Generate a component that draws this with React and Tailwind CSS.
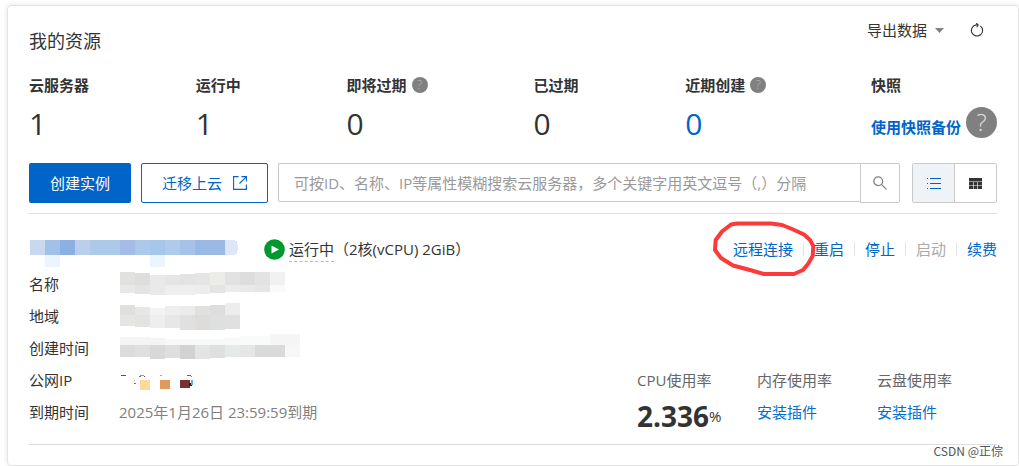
import { useState } from 'react';

// [x, y, width, height, fill]
const idBlocks = [
  [1, 2, 15, 15, '#c9d8ee'],
  [16, 2, 15, 15, '#a1c1e8'],
  [31, 2, 15, 15, '#8ab1e1'],
  [46, 2, 15, 15, '#bbcfec'],
  [61, 2, 30, 15, '#acc9ea'],
  [91, 2, 15, 15, '#a3bde6'],
  [106, 2, 15, 15, '#acc8ea'],
  [121, 2, 15, 15, '#a7c7ea'],
  [136, 2, 15, 15, '#afcbeb'],
  [151, 2, 15, 15, '#a7c1e7'],
  [166, 2, 30, 15, '#9ab9e4'],
  [196, 2, 10, 15, '#dbe7f8'],
  [206, 3, 2, 13, '#dbe7f8'],
  [208, 6, 1, 7, '#dbe7f8'],
  [16, 17, 15, 12, '#ecf4fe'],
  [121, 17, 15, 12, '#ecf4fe'],
];

const nameBlocks = [
  [1, 4, 15, 13, '#e1e1e0'],
  [16, 5, 15, 12, '#dedede'],
  [31, 7, 15, 10, '#e9e9e9'],
  [46, 7, 15, 10, '#e5e5e5'],
  [61, 6, 15, 11, '#e3e3e3'],
  [76, 5, 15, 12, '#e5e5e5'],
  [91, 4, 15, 13, '#ecece9'],
  [106, 4, 15, 13, '#e2e2e2'],
  [121, 4, 15, 13, '#dddddd'],
  [136, 4, 15, 13, '#e3e3e3'],
  [151, 4, 15, 13, '#f1f1f1'],
  [1, 17, 15, 8, '#e8e8e8'],
  [16, 17, 15, 9, '#e4e4e4'],
  [31, 17, 15, 10, '#e9e9ea'],
  [46, 17, 30, 10, '#eeeeee'],
  [76, 17, 15, 9, '#ededed'],
  [91, 17, 15, 8, '#e4e4e2'],
  [106, 17, 15, 7, '#ebebeb'],
  [121, 17, 15, 7, '#e9e9e9'],
  [136, 17, 15, 7, '#e6e6e6'],
  [151, 17, 15, 7, '#fafafa'],
];

const regionBlocks = [
  [1, 5, 15, 10, '#e0e0df'],
  [16, 7, 15, 8, '#e7e7e6'],
  [31, 8, 15, 7, '#f3f3f3'],
  [46, 6, 15, 9, '#eeeeee'],
  [61, 6, 15, 9, '#ebebeb'],
  [76, 6, 15, 9, '#e1e1e0'],
  [91, 5, 15, 10, '#dddddd'],
  [106, 3, 15, 12, '#ededed'],
  [1, 15, 15, 11, '#e5e5e4'],
  [16, 15, 15, 12, '#e3e3e2'],
  [31, 15, 15, 13, '#eeeeee'],
  [46, 15, 15, 13, '#e7e7e7'],
  [61, 15, 15, 15, '#e0e0e0'],
  [76, 15, 15, 15, '#dddcdb'],
  [91, 15, 15, 15, '#dee0e0'],
  [106, 15, 15, 14, '#e0e0e0'],
];

const createdBlocks = [
  [1, 5, 30, 8, '#f4f4f4'],
  [31, 6, 15, 7, '#f4f4f4'],
  [46, 7, 60, 6, '#f7f8f8'],
  [106, 6, 15, 7, '#f8f9f9'],
  [121, 4, 30, 9, '#f9fafa'],
  [151, 2, 30, 11, '#f5f5f5'],
  [1, 13, 15, 12, '#dcdcdc'],
  [16, 13, 15, 12, '#e0dfde'],
  [31, 13, 15, 14, '#d8d8d8'],
  [46, 13, 15, 13, '#dedede'],
  [61, 13, 15, 14, '#d4d2d0'],
  [76, 13, 15, 14, '#e2e4e6'],
  [91, 13, 15, 13, '#dedfdf'],
  [106, 13, 15, 12, '#e6e9e9'],
  [121, 13, 15, 12, '#e6e6e6'],
  [136, 13, 30, 12, '#dadada'],
  [166, 13, 15, 12, '#f7f7f7'],
];

const ipBlocks = [
  [2, 11, 5, 1, '#555555'],
  [20, 12, 2, 1, '#777777'],
  [21, 11, 4, 1, '#999999'],
  [25, 12, 1, 1, '#554477'],
  [41, 11, 2, 1, '#aaaaaa'],
  [68, 11, 4, 1, '#666666'],
  [72, 12, 1, 1, '#777777'],
  [15, 16, 1, 1, '#d0b090'],
  [15, 19, 2, 1, '#777777'],
  [21, 16, 10, 10, '#ffd89a'],
  [41, 16, 10, 9, '#e09a5b'],
  [61, 16, 10, 8, '#7a3030'],
  [70, 19, 3, 3, '#222222'],
  [72, 16, 2, 5, '#5aaef5'],
];

const stats = [
  { label: '云服务器', value: 1 },
  { label: '运行中', value: 1 },
  { label: '即将过期', value: 0, help: true },
  { label: '已过期', value: 0 },
  { label: '近期创建', value: 0, help: true, link: true },
];

const details = [
  { label: '名称', blocks: nameBlocks },
  { label: '地域', blocks: regionBlocks },
  { label: '创建时间', blocks: createdBlocks },
  { label: '公网IP', blocks: ipBlocks },
  { label: '到期时间', text: '2025年1月26日 23:59:59到期' },
];

const Mosaic = ({ blocks, className }) => (
  <svg className={className} shapeRendering="crispEdges" aria-hidden="true">
    {blocks.map(([x, y, w, h, fill]) => (
      <rect key={`${x}-${y}`} x={x} y={y} width={w} height={h} fill={fill} />
    ))}
  </svg>
);

const Help = ({ large }) => (
  <button
    type="button"
    aria-label="帮助"
    className={`flex shrink-0 items-center justify-center rounded-full bg-[#808080] font-light ${
      large ? 'size-[31px] text-2xl text-[#e0e0e0]' : 'size-4 text-xs text-[#b8b8b8]'
    }`}
  >
    ?
  </button>
);

const Divider = () => <span className="mx-[10px] h-[14px] w-px bg-[#e5e5e5]" />;

const Header = () => (
  <div className="flex items-start justify-between">
    <h2 className="mt-[10px] text-lg leading-6">我的资源</h2>
    <div className="flex items-center leading-[22px]">
      <button type="button" className="flex items-center gap-2">
        导出数据
        <svg width="9" height="5" viewBox="0 0 9 5" aria-hidden="true">
          <path d="M0 0h9L4.5 5z" fill="#808080" />
        </svg>
      </button>
      <button type="button" aria-label="刷新" className="mr-[13px] ml-[26px]">
        <svg width="14" height="14" viewBox="0 0 14 14" fill="none" stroke="#333" strokeWidth="1.1" aria-hidden="true">
          <path d="M10.3 2.900A5.600 5.600 0 1 1 6.200 1.900H8" />
          <path d="M6.200.200 8.200 1.900 6.800 4.200" />
        </svg>
      </button>
    </div>
  </div>
);

const Stats = () => (
  <div className="mt-[21px] grid grid-cols-[167fr_151fr_187fr_152fr_186fr_125fr]">
    {stats.map((item) => (
      <div key={item.label}>
        <div className="flex items-center gap-[5px] leading-[22px] font-bold">
          {item.label}
          {item.help && <Help />}
        </div>
        <div className={`mt-2 text-3xl leading-10 ${item.link ? 'text-[#0064c8]' : ''}`}>
          {item.link ? <a href="#recent">{item.value}</a> : item.value}
        </div>
      </div>
    ))}
    <div>
      <div className="leading-[22px] font-bold">快照</div>
      <div className="mt-2 flex h-9 items-center gap-[5px]">
        <a href="#snapshot" className="pt-[10px] font-bold whitespace-nowrap text-[#0064c8]">
          使用快照备份
        </a>
        <Help large />
      </div>
    </div>
  </div>
);

const Toolbar = () => {
  const [view, setView] = useState('list');

  return (
    <div className="mt-[19px] flex h-10">
      <button type="button" className="w-[102px] rounded-xs bg-[#0064c8] text-white">
        创建实例
      </button>
      <button
        type="button"
        className="ml-[10px] flex w-[127px] items-center justify-center gap-[11px] rounded-xs border border-[#0064c8] text-[#0064c8]"
      >
        迁移上云
        <svg width="14" height="14" viewBox="0 0 14 14" fill="none" stroke="#0064c8" strokeWidth="1.1" aria-hidden="true">
          <path d="M5.5.6H.6v12.8h12.8V8.5M8.5.6h4.9v4.9M13.2.8 6.500 7.500" />
        </svg>
      </button>

      <form className="ml-[10px] flex min-w-0 flex-1" onSubmit={(e) => e.preventDefault()}>
        <input
          type="text"
          aria-label="搜索云服务器"
          placeholder="可按ID、名称、IP等属性模糊搜索云服务器，多个关键字用英文逗号（,）分隔"
          className="h-[39px] min-w-0 flex-1 rounded-l-xs border border-r-0 border-[#c9c9c9] px-[15px] placeholder:text-[#999]"
        />
        <button
          type="submit"
          aria-label="搜索"
          className="flex w-10 items-center justify-center rounded-r-xs border border-[#c9c9c9]"
        >
          <svg width="14" height="14" viewBox="0 0 14 14" fill="none" stroke="#808080" strokeWidth="1.3" aria-hidden="true">
            <circle cx="5.2" cy="5.2" r="4.4" />
            <path d="m8.4 8.4 5 5" />
          </svg>
        </button>
      </form>

      <div className="ml-3 flex w-[85px] overflow-hidden rounded-xs border border-[#c9c9c9]">
        <button
          type="button"
          aria-label="列表"
          aria-pressed={view === 'list'}
          onClick={() => setView('list')}
          className={`flex flex-1 items-center justify-center border-r border-[#c9c9c9] ${
            view === 'list' ? 'bg-[#eff3f8] text-[#0064c8]' : ''
          }`}
        >
          <svg width="14" height="11" viewBox="0 0 14 11" fill="currentColor" shapeRendering="crispEdges" aria-hidden="true">
            <path d="M0 0h1v1H0zM3 0h11v1H3zM0 5h1v1H0zM3 5h11v1H3zM0 10h1v1H0zM3 10h11v1H3z" />
          </svg>
        </button>
        <button
          type="button"
          aria-label="卡片"
          aria-pressed={view === 'card'}
          onClick={() => setView('card')}
          className={`flex flex-1 items-center justify-center ${
            view === 'card' ? 'bg-[#eff3f8] text-[#0064c8]' : ''
          }`}
        >
          <svg width="13" height="11" viewBox="0 0 13 11" fill="currentColor" aria-hidden="true">
            <path d="M0 0h13v3.500H0zM0 4h4v3H0zM4.600 4h3.800v3H4.600zM9 4h4v3H9zM0 7.600h4V11H0zM4.600 7.600h3.800V11H4.600zM9 7.600h4V11H9z" />
          </svg>
        </button>
      </div>
    </div>
  );
};

const Instance = () => (
  <div className="mt-[10px] border-y border-[#dedede] pt-6 pb-2">
    <div className="flex h-[30px] items-start justify-between leading-[22px]">
      <div className="flex items-start">
        <Mosaic blocks={idBlocks} className="h-[30px] w-[209px]" />
        <svg className="ml-[26px]" width="21" height="22" viewBox="0 0 21 22" aria-hidden="true">
          <circle cx="10.5" cy="11.5" r="10.3" fill="#00982f" />
          <path d="M7.5 7.5v8l7.5-4z" fill="#fff" />
        </svg>
        <span className="ml-1 border-b border-dashed border-[#bbb] pb-px">运行中</span>
        <span>（2核(vCPU) 2GiB）</span>
      </div>

      <div className="flex items-center text-[#0064c8]">
        <div className="relative">
          <a href="#connect">远程连接</a>
          <svg
            className="pointer-events-none absolute -top-[18px] -left-[23px] h-[60px] w-[110px]"
            viewBox="710 220 110 60"
            fill="none"
            stroke="#fc3a3a"
            strokeWidth="4"
            strokeLinejoin="round"
            aria-hidden="true"
          >
            <path d="M731 224.500L737 223.500H771L782 225L792 229L804 234.500L810 240L813.300 246L812.700 256L808 264L803 270L794 274H764L750 270L733 265.500L721 258L715 250L715.700 240L722 231.500Z" />
          </svg>
        </div>
        <Divider />
        <a href="#restart">重启</a>
        <Divider />
        <a href="#stop">停止</a>
        <Divider />
        <button type="button" disabled className="text-[#aaa]">启动</button>
        <Divider />
        <a href="#renew">续费</a>
      </div>
    </div>

    <div className="flex items-start justify-between">
      <dl>
        {details.map((row) => (
          <div key={row.label} className="flex h-8 items-center">
            <dt className="w-[90px]">{row.label}</dt>
            <dd className="text-[#808080]">
              {row.blocks ? <Mosaic blocks={row.blocks} className="h-8 w-[190px]" /> : row.text}
            </dd>
          </div>
        ))}
      </dl>

      <div className="mt-24 grid grid-cols-[120px_120px_120px]">
        <div>
          <div className="leading-8 text-[#666]">CPU使用率</div>
          <div className="flex h-10 items-center">
            <span className="text-[28px] font-bold">2.336</span>
            <span>%</span>
          </div>
        </div>
        <div>
          <div className="leading-8 text-[#666]">内存使用率</div>
          <a href="#memory" className="block leading-8 text-[#0070cc]">安装插件</a>
        </div>
        <div>
          <div className="leading-8 text-[#666]">云盘使用率</div>
          <a href="#disk" className="block leading-8 text-[#0070cc]">安装插件</a>
        </div>
      </div>
    </div>
  </div>
);

const App = () => (
  <main className="relative bg-white pt-[5px] pl-[7px] font-['Open_Sans','Noto_Sans_CJK_SC',sans-serif] text-[15px] text-[#333]">
    <section className="rounded-sm border border-[#e3e3e3] px-[21px] pt-[13px] pb-5 shadow-[0_0_6px_rgba(0,0,0,0.1)]">
      <Header />
      <Stats />
      <Toolbar />
      <Instance />
    </section>
    <span className="absolute right-4 bottom-[7px] font-['Noto_Sans_CJK_SC',sans-serif] text-xs leading-4 text-[#555]">
      CSDN @正倧
    </span>
  </main>
);

export default App;
